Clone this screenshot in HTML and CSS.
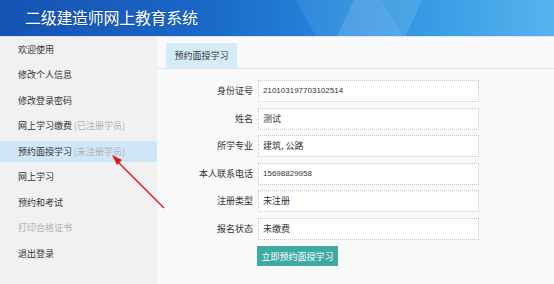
FILE: index.html
```html
<!DOCTYPE html>
<html lang="zh-CN">
<head>
    <meta charset="UTF-8">
    <title>二级建造师网上教育系统</title>
    <link rel="stylesheet" href="styles.css">
</head>
<body>
    <div id="header">
        <h1>二级建造师网上教育系统</h1>
    </div>
    <div id="main">
        <ul id="menu">
            <li>欢迎使用</li>
            <li>修改个人信息</li>
            <li>修改登录密码</li>
            <li>网上学习缴费 <span class="note">(已注册学员)</span></li>
            <li class="active">预约面授学习 <span class="note">(未注册学员)</span></li>
            <li>网上学习</li>
            <li>预约和考试</li>
            <li class="disabled">打印合格证书</li>
            <li>退出登录</li>
        </ul>
        <div id="content">
            <div id="tabs">
                <div class="tab">预约面授学习</div>
            </div>
            <div id="form">
                <label>身份证号</label><div class="field num">210103197703102514</div>
                <label>姓名</label><div class="field">测试</div>
                <label>所学专业</label><div class="field">建筑, 公路</div>
                <label>本人联系电话</label><div class="field num">15698829958</div>
                <label>注册类型</label><div class="field">未注册</div>
                <label>报名状态</label><div class="field">未缴费</div>
                <span></span><div><button id="book-button">立即预约面授学习</button></div>
            </div>
        </div>
    </div>
    <!-- red annotation arrow drawn over the page -->
    <svg id="arrow" width="554" height="284" viewBox="0 0 554 284">
        <line x1="164" y1="208" x2="118" y2="162" stroke="#e01818" stroke-width="1.4"/>
        <polygon points="112,155 122,160 117,165" fill="#e01818"/>
    </svg>
</body>
</html>
```

FILE: styles.css
```css
body {
    margin: 0;
    width: 554px;
    height: 284px;
    overflow: hidden;
    font-family: "Noto Sans CJK SC", "Liberation Sans", sans-serif;
    font-size: 9px;
    color: #333;
    background-color: #f9f9f9;
}

#header {
    height: 36px;
    border-bottom: 1px solid #d8e8f5;
    background:
        linear-gradient(115deg, transparent 0 62%, rgba(255,255,255,0.12) 62% 74%, transparent 74%),
        linear-gradient(60deg, transparent 0 55%, rgba(255,255,255,0.08) 55% 70%, transparent 70%),
        linear-gradient(90deg, #1553b2 0%, #1a66c6 35%, #2386dc 60%, #3a9fe6 80%, #56b3ee 100%);
}

#header h1 {
    margin: 0;
    padding-left: 25px;
    line-height: 34px;
    font-size: 16px;
    font-weight: normal;
    letter-spacing: -0.3px;
    color: #fff;
    text-shadow: 0 0 2px rgba(0,0,0,0.3);
}

#main {
    display: flex;
    height: 247px;
}

#menu {
    list-style: none;
    margin: 0;
    padding: 0;
    width: 157px;
    background-color: #f1f1f1;
}

#menu li {
    height: 21px;
    line-height: 21px;
    margin-top: 4.5px;
    padding-left: 18px;
}

#menu li:first-child {
    margin-top: 1.5px;
}

#menu li.active {
    background-color: #cfe8f7;
}

#menu .note,
#menu li.disabled {
    color: #b0b0b0;
}

#content {
    flex: 1;
}

#tabs {
    padding: 6px 0 0 9px;
    border-bottom: 1px solid #e4e4e4;
}

.tab {
    display: inline-block;
    width: 71px;
    height: 25px;
    line-height: 25px;
    text-align: center;
    background-color: #d5ecf8;
}

#form {
    display: grid;
    grid-template-columns: 96px 221px;
    column-gap: 5px;
    row-gap: 5.5px;
    margin-top: 11px;
}

#form label {
    text-align: right;
    line-height: 22px;
}

.field {
    height: 20px;
    line-height: 20px;
    padding-left: 4px;
    border: 1px dotted #c8c8c8;
    background-color: #fff;
}

.field.num {
    font-family: "Liberation Sans", sans-serif;
    font-size: 8px;
}

#book-button {
    display: block;
    margin-top: 1px;
    margin-left: -1px;
    width: 81px;
    height: 20px;
    padding: 0;
    border: none;
    background-color: #3ea9a5;
    color: #fff;
    font-family: "Noto Sans CJK SC", sans-serif;
    font-size: 9px;
    cursor: pointer;
}

#book-button:hover {
    background-color: #35958f;
}

#arrow {
    position: absolute;
    left: 0;
    top: 0;
    pointer-events: none;
}
```
